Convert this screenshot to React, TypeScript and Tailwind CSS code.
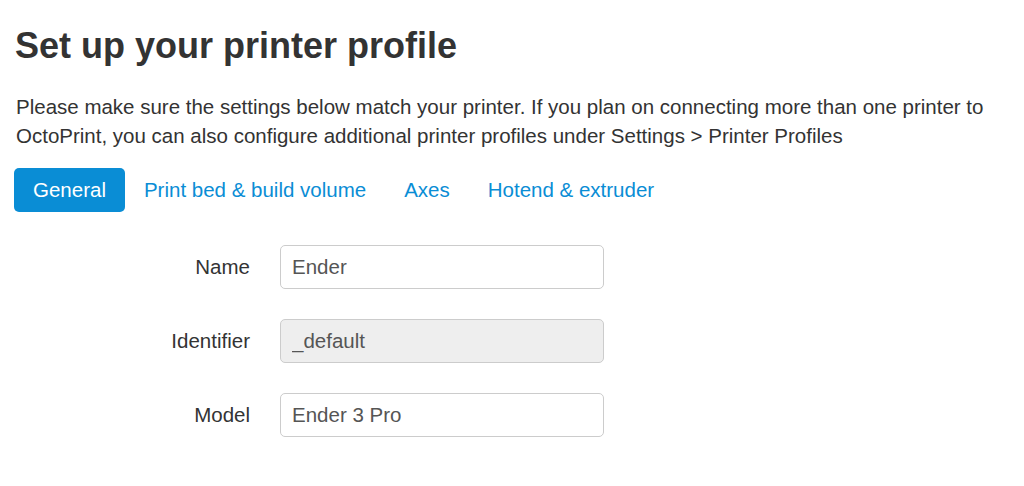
import { useState } from 'react';

const tabs = ['General', 'Print bed & build volume', 'Axes', 'Hotend & extruder'];

export default function App() {
  const [active, setActive] = useState('General');
  const [name, setName] = useState('Ender');
  const [model, setModel] = useState('Ender 3 Pro');

  return (
    <div className="min-h-[486px] bg-white pl-[14px] pr-4 pt-[27px] font-['Liberation_Sans',Arial,sans-serif] text-[#333]">
      <h1 className="ml-[1px] text-[36px] font-bold leading-[38px]">Set up your printer profile</h1>

      <p className="ml-[2px] mt-[27px] text-[20.5px] leading-[29px]">
        Please make sure the settings below match your printer. If you plan on connecting more than one printer to
        OctoPrint, you can also configure additional printer profiles under Settings &gt; Printer Profiles
      </p>

      <div className="mt-[18px] flex">
        {tabs.map((t) => (
          <button
            key={t}
            onClick={() => setActive(t)}
            className={
              t === active
                ? 'h-[44px] rounded-[5px] bg-[#0a8dd5] px-[19px] text-[20.5px] text-white'
                : 'h-[44px] rounded-[5px] px-[19px] text-[20.5px] text-[#0a8dd5]'
            }
          >
            {t}
          </button>
        ))}
      </div>

      <div className="mt-[33px] flex flex-col gap-[30px]">
        <div className="flex items-center">
          <label className="w-[236px] text-right text-[20.5px]">Name</label>
          <input
            value={name}
            onChange={(e) => setName(e.target.value)}
            className="ml-[30px] h-[44px] w-[324px] rounded-[5px] border border-[#ccc] px-[11px] text-[20.5px] text-[#555] outline-none"
          />
        </div>
        <div className="flex items-center">
          <label className="w-[236px] text-right text-[20.5px]">Identifier</label>
          <input
            value="_default"
            disabled
            readOnly
            className="ml-[30px] h-[44px] w-[324px] rounded-[5px] border border-[#ccc] bg-[#eee] px-[11px] text-[20.5px] text-[#555]"
          />
        </div>
        <div className="flex items-center">
          <label className="w-[236px] text-right text-[20.5px]">Model</label>
          <input
            value={model}
            onChange={(e) => setModel(e.target.value)}
            className="ml-[30px] h-[44px] w-[324px] rounded-[5px] border border-[#ccc] px-[11px] text-[20.5px] text-[#555] outline-none"
          />
        </div>
      </div>
    </div>
  );
}
